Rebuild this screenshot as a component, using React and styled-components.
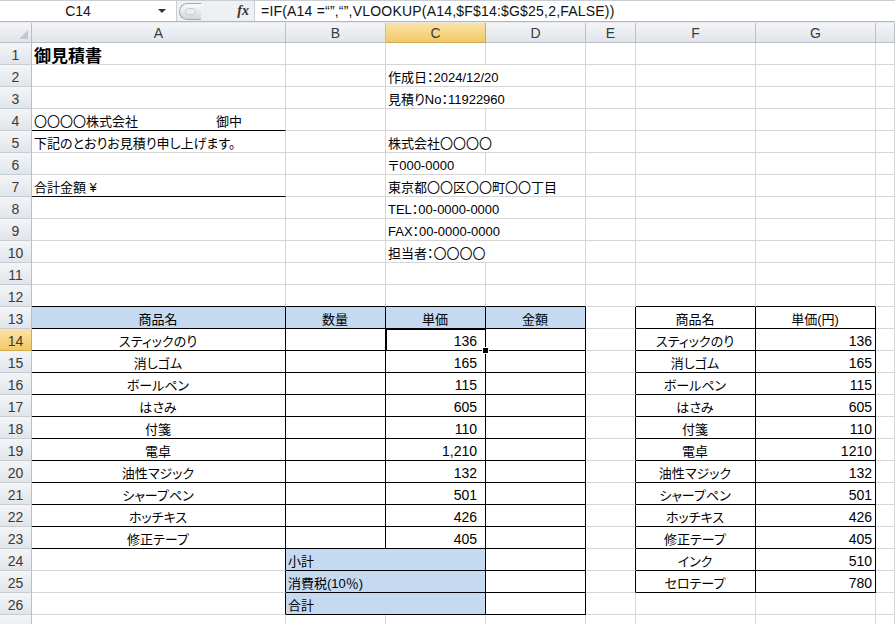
import React from "react";
import styled, { createGlobalStyle, css } from "styled-components";

const GlobalStyle = createGlobalStyle`
  html, body {
    margin: 0;
    padding: 0;
    background: #fff;
  }
`;

const COLS = ["A", "B", "C", "D", "E", "F", "G", "H"];
const WIDTHS = [254, 100, 100, 100, 50, 120, 120, 19];
const GRID_LINE = "#d6d6d6";
const HEAD_LINE = "#b9bfc7";
const BLUE = "#c5d9f1";

const items = [
  ["スティックのり", "136"],
  ["消しゴム", "165"],
  ["ボールペン", "115"],
  ["はさみ", "605"],
  ["付箋", "110"],
  ["電卓", "1,210"],
  ["油性マジック", "132"],
  ["シャープペン", "501"],
  ["ホッチキス", "426"],
  ["修正テープ", "405"],
];

const master = [
  ["スティックのり", "136"],
  ["消しゴム", "165"],
  ["ボールペン", "115"],
  ["はさみ", "605"],
  ["付箋", "110"],
  ["電卓", "1210"],
  ["油性マジック", "132"],
  ["シャープペン", "501"],
  ["ホッチキス", "426"],
  ["修正テープ", "405"],
  ["インク", "510"],
  ["セロテープ", "780"],
];

const Page = styled.div`
  width: 895px;
  height: 624px;
  overflow: hidden;
  background: #fff;
  font-family: "Liberation Sans", "Noto Sans CJK JP", sans-serif;
`;

const FormulaBar = styled.div`
  display: flex;
  height: 20px;
  border-top: 1px solid #c9ced5;
  border-bottom: 1px solid #b0b7c0;
  background: #eef0f3;
`;

const NameBox = styled.div`
  width: 176px;
  display: flex;
  align-items: center;
  background: #fff;
  border-right: 1px solid #c9ced5;
  font-size: 14px;
  color: #111;
  span:first-child {
    width: 156px;
    text-align: center;
  }
`;

const Arrow = styled.span`
  width: 0;
  height: 0;
  border-left: 4px solid transparent;
  border-right: 4px solid transparent;
  border-top: 4px solid #333;
  margin-left: 2px;
`;

const Tools = styled.div`
  width: 75px;
  display: flex;
  align-items: center;
  padding-left: 2px;
`;

const Splitter = styled.div`
  width: 22px;
  height: 17px;
  border: 1px solid #a3a8ae;
  border-right: none;
  border-radius: 9px 0 0 9px;
  background: linear-gradient(#fafafa, #d4d8dc);
  display: flex;
  align-items: center;
  padding-left: 5px;
  box-sizing: border-box;
  &::before {
    content: "";
    width: 9px;
    height: 5px;
    border-radius: 4px;
    background: #eceef0;
    border: 1px solid #c6cacf;
  }
`;

const Fx = styled.span`
  margin-left: auto;
  margin-right: 5px;
  font-family: "Liberation Serif", serif;
  font-style: italic;
  font-weight: bold;
  font-size: 14px;
  color: #333;
`;

const Formula = styled.div`
  flex: 1;
  background: #fff;
  border-left: 1px solid #c9ced5;
  padding-left: 6px;
  display: flex;
  align-items: center;
  font-size: 14px;
  letter-spacing: 0.2px;
  color: #111;
  white-space: nowrap;
`;

const Gap = styled.div`
  height: 1px;
  background: #e6e8eb;
`;

const Sheet = styled.div`
  display: grid;
  grid-template-columns: 32px ${WIDTHS.map((w) => `${w}px`).join(" ")};
  grid-template-rows: 20px;
  grid-auto-rows: 22px;
`;

const headBg = css`
  background: ${({ $active }) =>
    $active
      ? "linear-gradient(#fbe3a6, #f3c866)"
      : "linear-gradient(#f3f5f7, #e1e5ea)"};
`;

const Corner = styled.div`
  box-sizing: border-box;
  border-right: 1px solid ${HEAD_LINE};
  border-bottom: 1px solid ${HEAD_LINE};
  background: linear-gradient(#f3f5f7, #e1e5ea);
  display: flex;
  align-items: flex-end;
  justify-content: flex-end;
  padding: 0 3px 3px 0;
  &::after {
    content: "";
    width: 0;
    height: 0;
    border-left: 9px solid transparent;
    border-bottom: 9px solid #c3c8ce;
  }
`;

const ColHead = styled.div`
  box-sizing: border-box;
  ${headBg};
  border-right: 1px solid ${({ $active }) => ($active ? "#d2a94f" : HEAD_LINE)};
  border-bottom: 1px solid ${({ $active }) => ($active ? "#d2a94f" : HEAD_LINE)};
  display: flex;
  align-items: center;
  justify-content: center;
  font-size: 14px;
  color: #3a3a3a;
`;

const RowHead = styled.div`
  box-sizing: border-box;
  ${headBg};
  border-right: 1px solid ${({ $active }) => ($active ? "#d2a94f" : HEAD_LINE)};
  border-bottom: 1px solid ${({ $active }) => ($active ? "#d2a94f" : "#c8cdd4")};
  display: flex;
  align-items: center;
  justify-content: center;
  padding-top: 2px;
  font-size: 14px;
  color: #3a3a3a;
`;

const Cell = styled.div`
  position: relative;
  box-sizing: border-box;
  grid-column: span ${({ $span }) => $span || 1};
  border-right: 1px solid ${({ $rb }) => ($rb ? "#000" : GRID_LINE)};
  border-bottom: 1px solid ${({ $bb }) => ($bb ? "#000" : GRID_LINE)};
  background: ${({ $fill }) => $fill || "#fff"};
  display: flex;
  align-items: center;
  justify-content: ${({ $align }) =>
    $align === "center" ? "center" : $align === "right" ? "flex-end" : "flex-start"};
  padding: 2px ${({ $pr }) => $pr ?? 3}px 0 2px;
  white-space: nowrap;
  font-size: ${({ $title, $num }) => ($title ? "17px" : $num ? "14px" : "13px")};
  font-weight: ${({ $title }) => ($title ? "bold" : "normal")};
  font-feature-settings: "palt";
  color: #000;
  ${({ $selected }) =>
    $selected &&
    css`
      box-shadow: inset 1px 1px 0 #000, inset -1px -1px 0 #fff;
    `}
`;

const Suffix = styled.span`
  margin-left: auto;
  margin-right: 40px;
`;

const FillHandle = styled.span`
  position: absolute;
  right: -4px;
  bottom: -4px;
  width: 5px;
  height: 5px;
  background: #000;
  border: 1px solid #fff;
  z-index: 2;
`;

function buildRows() {
  const rows = {};
  const set = (r, c, spec) => {
    rows[r] = rows[r] || {};
    rows[r][c] = { ...(rows[r][c] || {}), ...spec };
  };

  set(1, "A", { text: "御見積書", title: true });
  set(2, "C", { span: 2, text: "作成日：2024/12/20" });
  set(3, "C", { span: 2, text: "見積りNo：11922960" });
  set(4, "A", { text: "〇〇〇〇株式会社", suffix: "御中", bb: true });
  set(5, "A", { text: "下記のとおりお見積り申し上げます。" });
  set(5, "C", { span: 2, text: "株式会社〇〇〇〇" });
  set(6, "C", { text: "〒000-0000" });
  set(7, "A", { text: "合計金額 ¥", bb: true });
  set(7, "C", { span: 2, text: "東京都〇〇区〇〇町〇〇丁目" });
  set(8, "C", { span: 2, text: "TEL：00-0000-0000" });
  set(9, "C", { span: 2, text: "FAX：00-0000-0000" });
  set(10, "C", { span: 2, text: "担当者：〇〇〇〇" });

  ["A", "B", "C", "D", "F", "G"].forEach((c) => set(12, c, { bb: true }));

  const heads = { A: "商品名", B: "数量", C: "単価", D: "金額" };
  Object.entries(heads).forEach(([c, t]) =>
    set(13, c, { text: t, align: "center", fill: BLUE, rb: true, bb: true })
  );

  items.forEach(([name, price], i) => {
    const r = 14 + i;
    set(r, "A", { text: name, align: "center", rb: true, bb: true });
    set(r, "B", { rb: true, bb: true });
    set(r, "C", { text: price, num: true, align: "right", pr: 8, rb: true, bb: true });
    set(r, "D", { rb: true, bb: true });
  });
  set(14, "C", { selected: true, handle: true });

  ["小計", "消費税(10％)", "合計"].forEach((t, i) => {
    const r = 24 + i;
    set(r, "A", { rb: true });
    set(r, "B", { span: 2, text: t, fill: BLUE, rb: true, bb: true });
    set(r, "D", { rb: true, bb: true });
  });

  set(13, "E", { rb: true });
  set(13, "F", { text: "商品名", align: "center", rb: true, bb: true });
  set(13, "G", { text: "単価(円)", align: "center", rb: true, bb: true });
  master.forEach(([name, price], i) => {
    const r = 14 + i;
    set(r, "E", { rb: true });
    set(r, "F", { text: name, align: "center", rb: true, bb: true });
    set(r, "G", { text: price, num: true, align: "right", rb: true, bb: true });
  });

  return rows;
}

const ROWS = buildRows();

function SheetRow({ r }) {
  const spec = ROWS[r] || {};
  const out = [];
  let skip = 0;
  COLS.forEach((c) => {
    if (skip > 0) {
      skip -= 1;
      return;
    }
    const s = spec[c] || {};
    if (s.span) skip = s.span - 1;
    out.push(
      <Cell
        key={c}
        $span={s.span}
        $rb={s.rb}
        $bb={s.bb}
        $fill={s.fill}
        $align={s.align}
        $title={s.title}
        $num={s.num}
        $pr={s.pr}
        $selected={s.selected}
      >
        {s.text}
        {s.suffix && <Suffix>{s.suffix}</Suffix>}
        {s.handle && <FillHandle />}
      </Cell>
    );
  });
  return (
    <>
      <RowHead $active={r === 14}>{r <= 26 ? r : ""}</RowHead>
      {out}
    </>
  );
}

export default function App() {
  const rows = Array.from({ length: 27 }, (_, i) => i + 1);
  return (
    <Page>
      <GlobalStyle />
      <FormulaBar>
        <NameBox>
          <span>C14</span>
          <Arrow />
        </NameBox>
        <Tools>
          <Splitter />
          <Fx>fx</Fx>
        </Tools>
        <Formula>{"=IF(A14 =\u201c\u201d,\u201c\u201d,VLOOKUP(A14,$F$14:$G$25,2,FALSE))"}</Formula>
      </FormulaBar>
      <Gap />
      <Sheet>
        <Corner />
        {COLS.map((c) => (
          <ColHead key={c} $active={c === "C"}>
            {c === "H" ? "" : c}
          </ColHead>
        ))}
        {rows.map((r) => (
          <SheetRow key={r} r={r} />
        ))}
      </Sheet>
    </Page>
  );
}
